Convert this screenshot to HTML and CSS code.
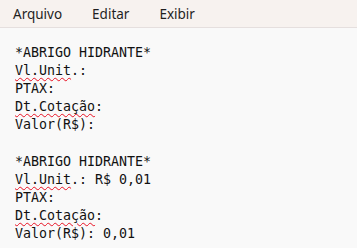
FILE: index.html
```html
<!DOCTYPE html>
<html lang="pt">
<head>
  <meta charset="UTF-8">
  <title>Bloco de Notas</title>
  <link rel="stylesheet" href="styles.css">
</head>
<body>
  <div class="menubar">
    <span class="menu-item">Arquivo</span>
    <span class="menu-item">Editar</span>
    <span class="menu-item">Exibir</span>
  </div>

  <div class="editor">
    <div class="line">*ABRIGO HIDRANTE*</div>
    <div class="line"><span class="typo">Vl.Unit</span>.:</div>
    <div class="line">PTAX:</div>
    <div class="line"><span class="typo">Dt.Cotação</span>:</div>
    <div class="line">Valor(R$):</div>
    <div class="line">&nbsp;</div>
    <div class="line">*ABRIGO HIDRANTE*</div>
    <div class="line"><span class="typo">Vl.Unit</span>.: R$ 0,01</div>
    <div class="line">PTAX:</div>
    <div class="line"><span class="typo">Dt.Cotação</span>:</div>
    <div class="line">Valor(R$): 0,01</div>
  </div>
</body>
</html>
```

FILE: styles.css
```css
body {
  margin: 0;
  background-color: #f9f9f9;
  overflow: hidden;
}
.menubar {
  display: flex;
  gap: 30px;
  height: 27px;
  align-items: center;
  padding-left: 13px;
  background-color: #f7f2ef;
  border-bottom: 1px solid #e5dfde;
  font-family: "Noto Sans", sans-serif;
  font-size: 13.5px;
  color: #1f1f1f;
}
.editor {
  padding: 16px 15px 0;
  font-family: "DejaVu Sans Mono", monospace;
  font-size: 13.3px;
  line-height: 18.1px;
  color: #111;
}
.line {
  white-space: pre;
}
.typo {
  text-decoration: underline wavy #e81123;
  text-decoration-thickness: 1px;
  text-underline-offset: 2px;
}
```
